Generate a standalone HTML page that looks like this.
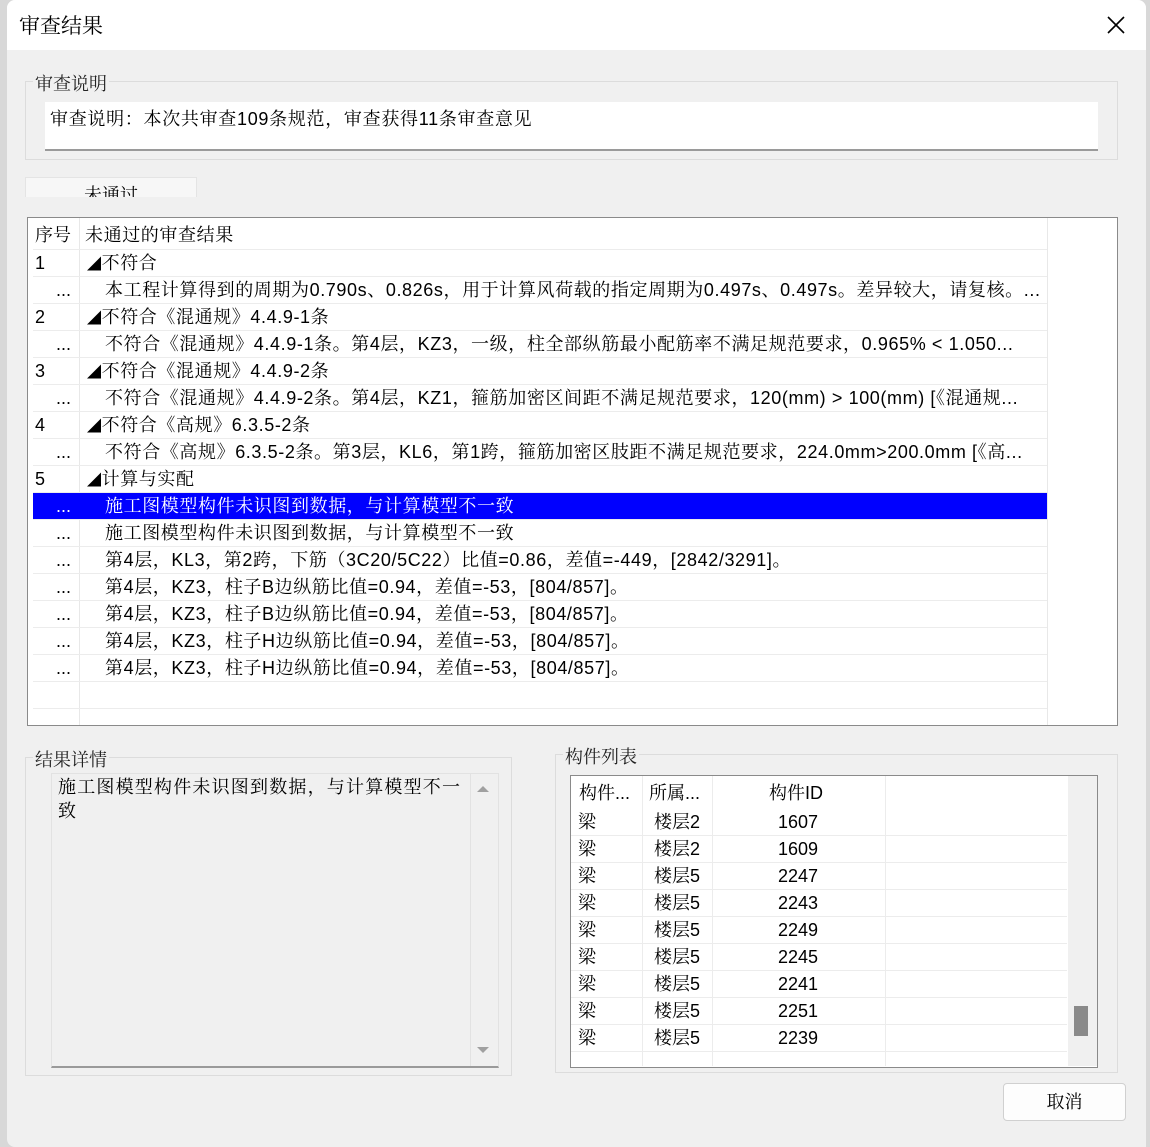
<!DOCTYPE html>
<html><head><meta charset="utf-8"><style>
*{box-sizing:border-box;margin:0;padding:0}
body{width:1150px;height:1147px;background:#d8d8d8;position:relative;overflow:hidden;font-family:"Liberation Sans","Noto Serif CJK SC","Noto Sans CJK SC",serif;font-size:18px;color:#000}
.abs{position:absolute}
.dlg{left:7px;top:0;width:1139px;height:1147px;background:#f0f0f0;border-radius:8px 8px 0 8px;overflow:hidden}
.title{left:0;top:0;width:1139px;height:50px;background:#fff}
.grp{border:1px solid #dcdcdc}
.lbl{background:#f0f0f0;padding:0 2px;color:#222}
.row{position:absolute;left:0;height:27px;width:1014px;border-bottom:1px solid #ececec;white-space:nowrap;line-height:27px}
.row .c1{position:absolute;left:0;width:46px;padding-left:2px}
.row .c2{position:absolute;left:52px;padding-left:2px;width:960px;overflow:hidden;letter-spacing:0.6px}
.r{position:absolute;left:0;width:496px;height:27px;border-bottom:1px solid #ececec;line-height:27px;white-space:nowrap}
.r span{position:absolute;top:0}
.tri{font-size:14px}
</style></head><body>
<div class="abs dlg">
 <div class="abs title"><div class="abs" style="left:12px;top:10px;font-size:21px">审查结果</div>
 <svg class="abs" style="left:1100px;top:16px" width="18" height="18"><path d="M1 1L17 17M17 1L1 17" stroke="#000" stroke-width="1.6"/></svg></div>
 <div class="abs grp" style="left:18px;top:81px;width:1093px;height:79px"></div>
 <div class="abs lbl" style="left:26px;top:70px">审查说明</div>
 <div class="abs" style="left:38px;top:102px;width:1053px;height:49px;background:#fff;border-bottom:2px solid #9a9a9a;padding:3px 5px;letter-spacing:0.7px">审查说明：本次共审查109条规范，审查获得11条审查意见</div>
 <div class="abs" style="left:18px;top:177px;width:172px;height:20px;background:#f7f7f7;border:1px solid #e4e4e4;border-bottom:none;overflow:hidden"><div style="position:absolute;left:58px;top:3px">未通过</div></div>
 <div class="abs" style="left:20px;top:217px;width:1091px;height:509px;background:#fff;border:1px solid #8a8a8a">
  <div class="abs" style="left:51px;top:0;width:1px;height:507px;background:#e8e8e8"></div>
  <div class="abs" style="left:1019px;top:0;width:1px;height:507px;background:#e8e8e8"></div>
  <div class="abs" style="left:5px;top:3px;width:1014px">
   <div class="row" style="top:0;height:29px;line-height:29px"><span class="c1">序号</span><span class="c2" style="left:50px">未通过的审查结果</span></div>
   <div class="row" style="top:29px"><span class="c1">1</span><span class="c2"><span class="tri">◢</span>不符合</span></div>
   <div class="row" style="top:56px"><span class="c1" style="text-align:right;padding-right:8px">...</span><span class="c2" style="padding-left:20px">本工程计算得到的周期为0.790s、0.826s，用于计算风荷载的指定周期为0.497s、0.497s。差异较大，请复核。...</span></div>
   <div class="row" style="top:83px"><span class="c1">2</span><span class="c2"><span class="tri">◢</span>不符合《混通规》4.4.9-1条</span></div>
   <div class="row" style="top:110px"><span class="c1" style="text-align:right;padding-right:8px">...</span><span class="c2" style="padding-left:20px">不符合《混通规》4.4.9-1条。第4层，KZ3，一级，柱全部纵筋最小配筋率不满足规范要求，0.965% &lt; 1.050...</span></div>
   <div class="row" style="top:137px"><span class="c1">3</span><span class="c2"><span class="tri">◢</span>不符合《混通规》4.4.9-2条</span></div>
   <div class="row" style="top:164px"><span class="c1" style="text-align:right;padding-right:8px">...</span><span class="c2" style="padding-left:20px">不符合《混通规》4.4.9-2条。第4层，KZ1，箍筋加密区间距不满足规范要求，120(mm) &gt; 100(mm) [《混通规...</span></div>
   <div class="row" style="top:191px"><span class="c1">4</span><span class="c2"><span class="tri">◢</span>不符合《高规》6.3.5-2条</span></div>
   <div class="row" style="top:218px"><span class="c1" style="text-align:right;padding-right:8px">...</span><span class="c2" style="padding-left:20px">不符合《高规》6.3.5-2条。第3层，KL6，第1跨，箍筋加密区肢距不满足规范要求，224.0mm&gt;200.0mm [《高...</span></div>
   <div class="row" style="top:245px"><span class="c1">5</span><span class="c2"><span class="tri">◢</span>计算与实配</span></div>
   <div class="row" style="top:272px;background:#0000ff;color:#fff;left:0"><span class="c1" style="text-align:right;padding-right:8px">...</span><span class="c2" style="padding-left:20px">施工图模型构件未识图到数据，与计算模型不一致</span></div>
   <div class="row" style="top:299px"><span class="c1" style="text-align:right;padding-right:8px">...</span><span class="c2" style="padding-left:20px">施工图模型构件未识图到数据，与计算模型不一致</span></div>
   <div class="row" style="top:326px"><span class="c1" style="text-align:right;padding-right:8px">...</span><span class="c2" style="padding-left:20px">第4层，KL3，第2跨，下筋（3C20/5C22）比值=0.86，差值=-449，[2842/3291]。</span></div>
   <div class="row" style="top:353px"><span class="c1" style="text-align:right;padding-right:8px">...</span><span class="c2" style="padding-left:20px">第4层，KZ3，柱子B边纵筋比值=0.94，差值=-53，[804/857]。</span></div>
   <div class="row" style="top:380px"><span class="c1" style="text-align:right;padding-right:8px">...</span><span class="c2" style="padding-left:20px">第4层，KZ3，柱子B边纵筋比值=0.94，差值=-53，[804/857]。</span></div>
   <div class="row" style="top:407px"><span class="c1" style="text-align:right;padding-right:8px">...</span><span class="c2" style="padding-left:20px">第4层，KZ3，柱子H边纵筋比值=0.94，差值=-53，[804/857]。</span></div>
   <div class="row" style="top:434px"><span class="c1" style="text-align:right;padding-right:8px">...</span><span class="c2" style="padding-left:20px">第4层，KZ3，柱子H边纵筋比值=0.94，差值=-53，[804/857]。</span></div>
   <div class="row" style="top:461px"></div>
  </div>
 </div>
 <div class="abs grp" style="left:18px;top:757px;width:487px;height:319px"></div>
 <div class="abs lbl" style="left:26px;top:746px">结果详情</div>
 <div class="abs" style="left:44px;top:773px;width:448px;height:295px;border:1px solid #e2e2e2;border-bottom:2px solid #9a9a9a"></div>
 <div class="abs" style="left:51px;top:775px;width:405px;line-height:24px;letter-spacing:1.2px">施工图模型构件未识图到数据，与计算模型不一致</div>
 <div class="abs" style="left:463px;top:774px;width:1px;height:292px;background:#e2e2e2"></div>
 <svg class="abs" style="left:469px;top:784px" width="14" height="280"><path d="M1 8L7 2L13 8Z" fill="#a0a0a0"/><path d="M1 263L7 269L13 263Z" fill="#a0a0a0"/></svg>
 <div class="abs grp" style="left:548px;top:754px;width:563px;height:319px"></div>
 <div class="abs lbl" style="left:556px;top:743px">构件列表</div>
 <div class="abs" style="left:563px;top:775px;width:528px;height:293px;background:#fff;border:1px solid #8a8a8a">
  <div class="abs" style="left:71px;top:0;width:1px;height:290px;background:#ececec"></div>
  <div class="abs" style="left:141px;top:0;width:1px;height:290px;background:#ececec"></div>
  <div class="abs" style="left:314px;top:0;width:1px;height:290px;background:#ececec"></div>
  <div class="abs" style="left:497px;top:0;width:29px;height:290px;background:#f0f0f0"><div class="abs" style="left:6px;top:230px;width:14px;height:30px;background:#8a8a8a"></div></div>
  <div class="r" style="top:2px;height:31px;line-height:31px;border:none"><span style="left:8px">构件...</span><span style="left:78px">所属...</span><span style="left:198px">构件ID</span></div>
  <div class="abs" style="left:0;top:33px;width:496px">
   <div class="r" style="top:0"><span style="left:7px">梁</span><span style="left:83px">楼层2</span><span style="left:207px">1607</span></div>
   <div class="r" style="top:27px"><span style="left:7px">梁</span><span style="left:83px">楼层2</span><span style="left:207px">1609</span></div>
   <div class="r" style="top:54px"><span style="left:7px">梁</span><span style="left:83px">楼层5</span><span style="left:207px">2247</span></div>
   <div class="r" style="top:81px"><span style="left:7px">梁</span><span style="left:83px">楼层5</span><span style="left:207px">2243</span></div>
   <div class="r" style="top:108px"><span style="left:7px">梁</span><span style="left:83px">楼层5</span><span style="left:207px">2249</span></div>
   <div class="r" style="top:135px"><span style="left:7px">梁</span><span style="left:83px">楼层5</span><span style="left:207px">2245</span></div>
   <div class="r" style="top:162px"><span style="left:7px">梁</span><span style="left:83px">楼层5</span><span style="left:207px">2241</span></div>
   <div class="r" style="top:189px"><span style="left:7px">梁</span><span style="left:83px">楼层5</span><span style="left:207px">2251</span></div>
   <div class="r" style="top:216px"><span style="left:7px">梁</span><span style="left:83px">楼层5</span><span style="left:207px">2239</span></div>
  </div>
 </div>
 <div class="abs" style="left:996px;top:1083px;width:123px;height:38px;background:#fdfdfd;border:1px solid #d0d0d0;border-radius:4px;text-align:center;line-height:36px">取消</div>
</div>
</body></html>
